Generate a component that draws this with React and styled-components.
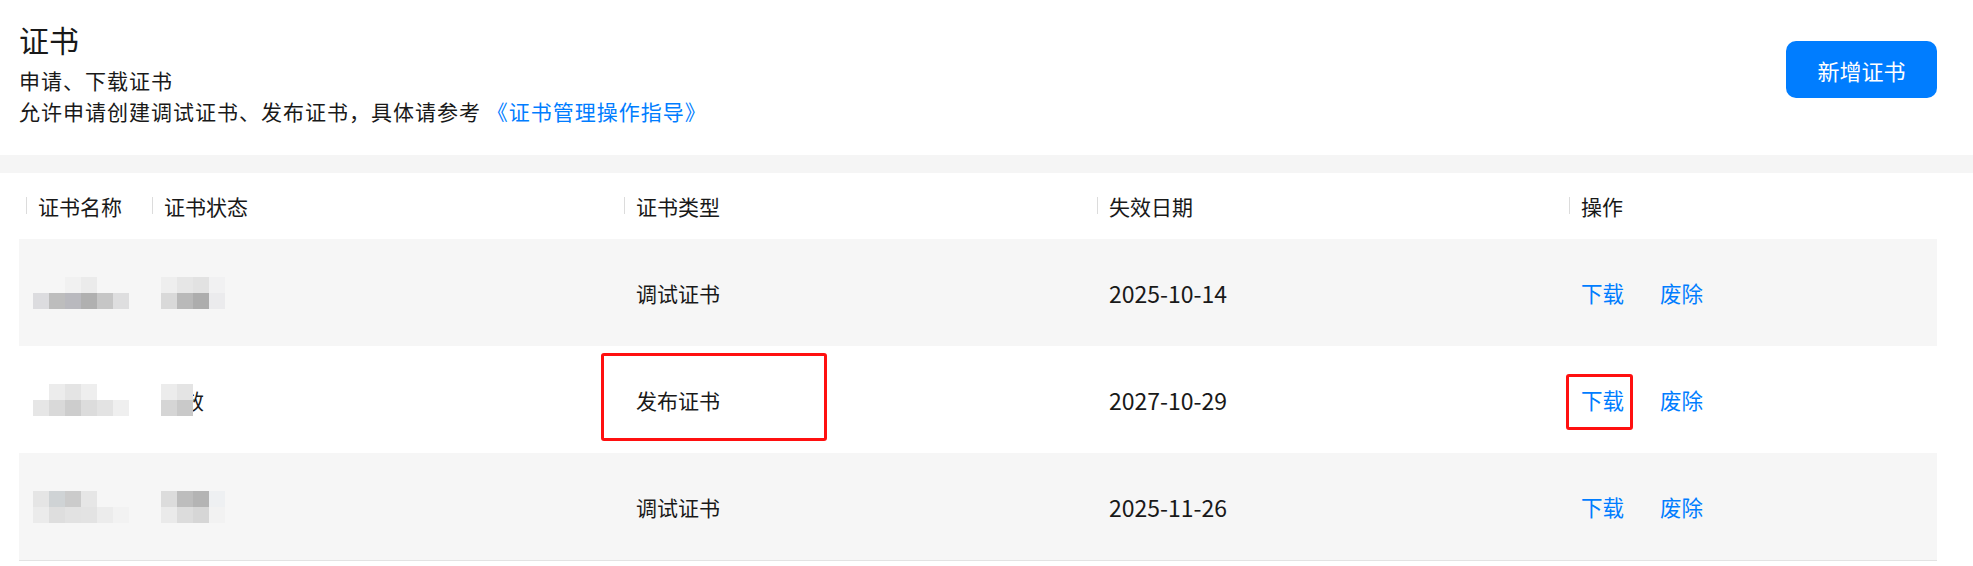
import React from "react";
import styled, { createGlobalStyle } from "styled-components";

const GlobalStyle = createGlobalStyle`
  body {
    margin: 0;
    background: #fff;
    font-family: "Noto Sans CJK SC", "Noto Sans", sans-serif;
    color: #191919;
  }
`;

const Page = styled.div`
  position: relative;
  width: 1973px;
  height: 566px;
  overflow: hidden;
  background: #fff;
`;

const Top = styled.div`
  display: flex;
  justify-content: space-between;
  align-items: flex-start;
  padding: 19px 36px 28px 19px;
`;

const Title = styled.h1`
  margin: 0;
  font-size: 30px;
  line-height: 40px;
  font-weight: 400;
  color: #191919;
`;

const Desc = styled.div`
  margin-top: 6px;
  font-size: 21px;
  line-height: 31px;
  letter-spacing: 1px;
`;

const Link = styled.a`
  color: #007dff;
  text-decoration: none;
`;

const AddButton = styled.button`
  margin-top: 22px;
  width: 151px;
  height: 57px;
  border: none;
  border-radius: 10px;
  background: #007dff;
  color: #fff;
  font-family: inherit;
  font-size: 22px;
`;

const Band = styled.div`
  height: 18px;
  background: #f5f5f5;
`;

const Table = styled.div`
  margin: 0 36px 0 19px;
  border-bottom: 1px solid #e3e3e3;
`;

const columns = "126px 472px 473px 472px 1fr";

const HeadRow = styled.div`
  display: grid;
  grid-template-columns: ${columns};
  height: 66px;
`;

const HeadCell = styled.div`
  position: relative;
  display: flex;
  align-items: center;
  padding-left: 19px;
  font-size: 21px;
  color: #191919;

  &::before {
    content: "";
    position: absolute;
    left: 7px;
    top: 24px;
    width: 1px;
    height: 17px;
    background: #dcdcdc;
  }
`;

const Row = styled.div`
  display: grid;
  grid-template-columns: ${columns};
  height: 107px;
  background: ${({ $shaded }) => ($shaded ? "#f6f6f6" : "#fff")};
`;

const Cell = styled.div`
  display: flex;
  align-items: center;
  padding-left: 19px;
  font-size: ${({ $size }) => $size || 21}px;
  color: #191919;
`;

const Actions = styled(Cell)`
  gap: 36px;
`;

const Action = styled.a`
  color: #007dff;
  text-decoration: none;
`;

const MosaicSvg = styled.svg`
  display: block;
  margin-left: ${({ $shift }) => $shift}px;
  position: relative;
  z-index: 1;
`;

const PeekChar = styled.span`
  margin-left: -10px;
  color: #191919;
`;

const Marker = styled.div`
  position: absolute;
  border: 3px solid #ff1010;
  border-radius: 3px;
  box-sizing: border-box;
`;

const Mosaic = ({ cells, shift }) => {
  const size = 16;
  const cols = Math.max(...cells.map((r) => r.length));
  return (
    <MosaicSvg
      $shift={shift}
      width={cols * size}
      height={cells.length * size}
      viewBox={`0 0 ${cols * size} ${cells.length * size}`}
    >
      {cells.map((row, y) =>
        row.map((c, x) =>
          c ? <rect key={`${x}-${y}`} x={x * size} y={y * size} width={size} height={size} fill={c} /> : null
        )
      )}
    </MosaicSvg>
  );
};

const rows = [
  {
    name: [
      [null, null, "#f1f1f1", "#ebebeb", null, null],
      ["#dcdcdf", "#bdbdbd", "#b9b9be", "#b0b0b0", "#c6c6c6", "#dededf"],
    ],
    status: [
      ["#eeeeee", "#e6e6e6", "#e2e2e2", "#f1f1f2"],
      ["#d9d9d9", "#b9b9b9", "#adadad", "#ebebed"],
    ],
    type: "调试证书",
    date: "2025-10-14",
  },
  {
    name: [
      [null, "#ececec", "#e4e4e4", "#eeeeee", null, null],
      ["#e6e6e6", "#d9d9d9", "#cdcdcd", "#dcdcdc", "#e3e3e3", "#efefef"],
    ],
    status: [
      ["#ececec", "#e4e4e4"],
      ["#d5d5d5", "#c9c9c9"],
    ],
    peek: "效",
    type: "发布证书",
    date: "2027-10-29",
  },
  {
    name: [
      ["#e5e5e5", "#cfd3d5", "#cbcbcb", "#e6e6e6", null, null],
      ["#ebebeb", "#dedede", "#e2e2e2", "#e3e3e3", "#ececec", "#f2f2f2"],
    ],
    status: [
      ["#dcdcdc", "#bdbdbd", "#b4b4b4", "#eef0f2"],
      ["#eaeaea", "#dcdcdc", "#d6d6d6", "#f2f2f2"],
    ],
    type: "调试证书",
    date: "2025-11-26",
  },
];

const App = () => {
  return (
    <>
      <GlobalStyle />
      <Page>
        <Top>
          <div>
            <Title>证书</Title>
            <Desc>
              <div>申请、下载证书</div>
              <div>
                允许申请创建调试证书、发布证书，具体请参考 <Link href="#">《证书管理操作指导》</Link>
              </div>
            </Desc>
          </div>
          <AddButton>新增证书</AddButton>
        </Top>
        <Band />
        <Table>
          <HeadRow>
            <HeadCell>证书名称</HeadCell>
            <HeadCell>证书状态</HeadCell>
            <HeadCell>证书类型</HeadCell>
            <HeadCell>失效日期</HeadCell>
            <HeadCell>操作</HeadCell>
          </HeadRow>
          {rows.map((r, i) => (
            <Row key={i} $shaded={i % 2 === 0}>
              <Cell>
                <Mosaic cells={r.name} shift={-5} />
              </Cell>
              <Cell>
                <Mosaic cells={r.status} shift={-3} />
                {r.peek && <PeekChar>{r.peek}</PeekChar>}
              </Cell>
              <Cell>{r.type}</Cell>
              <Cell $size={23}>{r.date}</Cell>
              <Actions $size={21.5}>
                <Action href="#">下载</Action>
                <Action href="#">废除</Action>
              </Actions>
            </Row>
          ))}
        </Table>
        <Marker style={{ left: 601, top: 353, width: 226, height: 88 }} />
        <Marker style={{ left: 1566, top: 374, width: 67, height: 56 }} />
      </Page>
    </>
  );
};

export default App;
